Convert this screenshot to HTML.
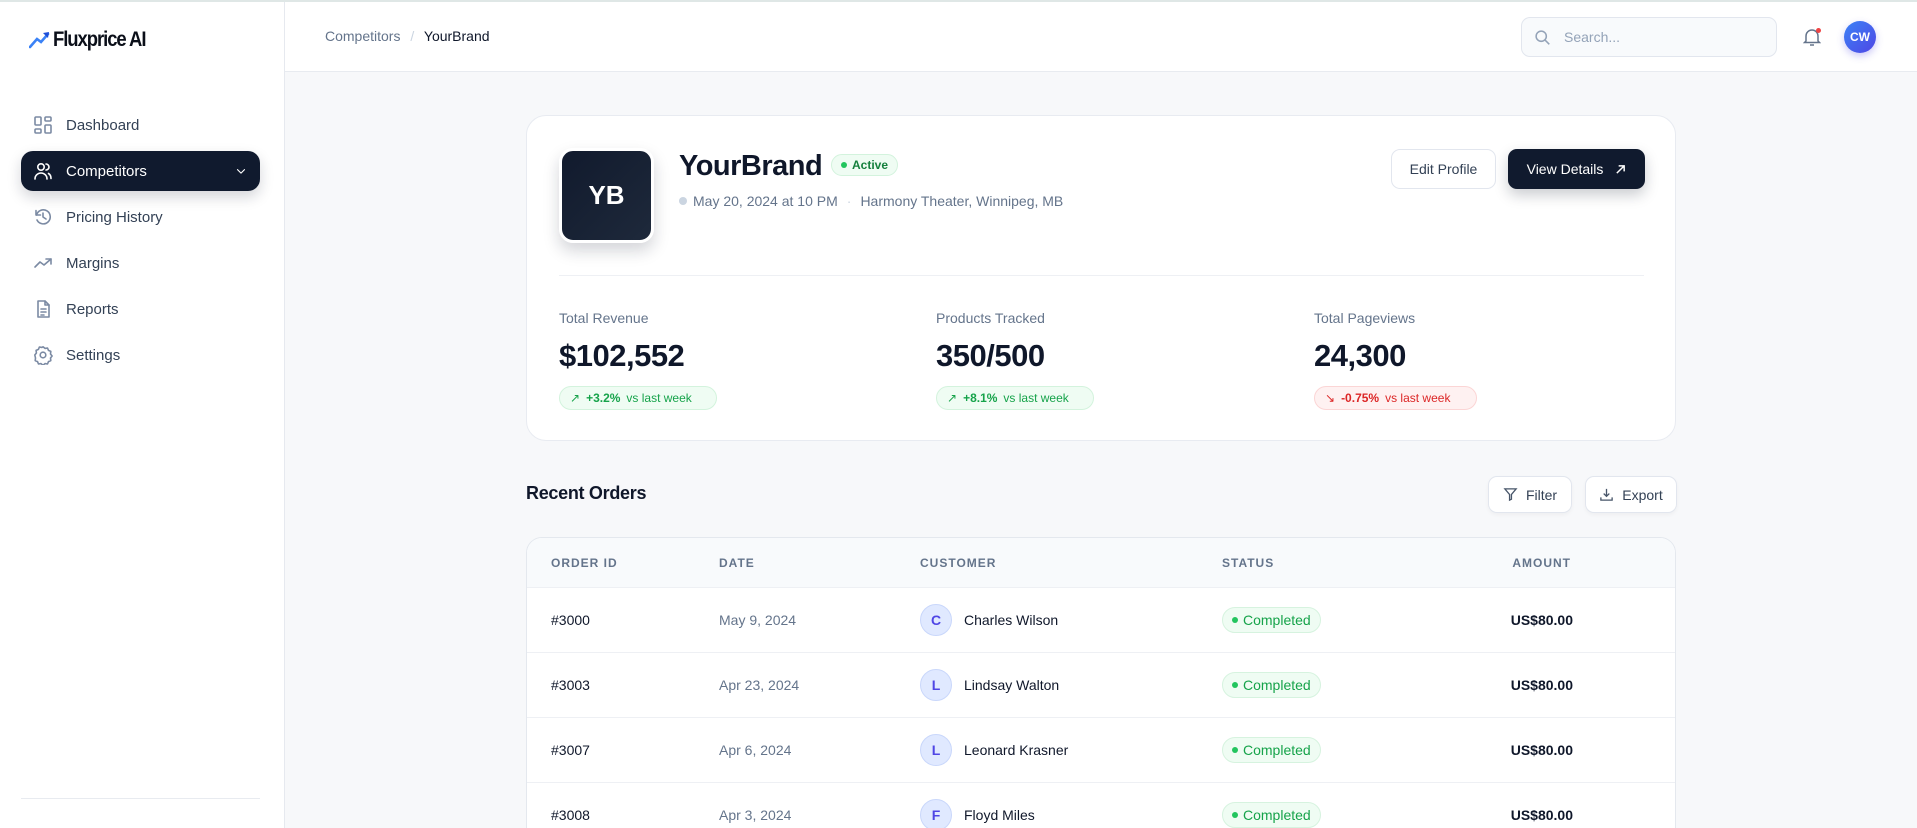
<!DOCTYPE html>
<html><head><meta charset="utf-8"><style>
*{box-sizing:border-box;margin:0;padding:0}
html,body{width:1917px;height:828px;overflow:hidden}
body{font-family:"Liberation Sans",sans-serif;background:#f7f8fa;color:#0f172a;position:relative}
.abs{position:absolute}
.side{left:0;top:0;width:285px;height:828px;background:#fff;border-right:1px solid #e6e9ef}
.topline{left:0;top:0;width:1917px;height:2px;background:#dfe7e6;z-index:5}
.hdr{left:285px;top:0;width:1632px;height:72px;background:#fff;border-bottom:1px solid #e8ebf0}
.nav{left:21px;width:239px;height:40px;display:flex;align-items:center;padding-left:12px;font-size:15px;color:#334155;border-radius:12px}
.nav svg{width:20px;height:20px;margin-right:13px;fill:none;stroke:#7b8aa3;stroke-width:1.6;stroke-linecap:round;stroke-linejoin:round}
.nav.act{background:#101a2e;color:#fff;box-shadow:0 6px 14px rgba(15,23,42,.18)}
.nav.act svg{stroke:#fff}
.card{left:526px;top:115px;width:1150px;height:326px;background:#fff;border:1px solid #e8ebf1;border-radius:20px}
.lbl{font-size:14px;color:#64748b}
.val{font-size:31px;font-weight:700;color:#0f172a;letter-spacing:-.5px}
.chg{height:24px;border-radius:12px;display:flex;align-items:center;padding:0 10px;font-size:12px;gap:6px}
.up{background:#effcf3;border:1px solid #d3f3dd;color:#16a34a}
.dn{background:#fef1f1;border:1px solid #fbd5d5;color:#dc2626}
.btn{height:40px;border-radius:9px;display:flex;align-items:center;justify-content:center;font-size:14px}
.tbl{left:526px;top:537px;width:1150px;height:420px;background:#fff;border:1px solid #e4e8ee;border-radius:16px;overflow:hidden}
.th{font-size:12px;font-weight:700;color:#64748b;letter-spacing:1px;top:18px}
.row{left:0;width:1150px;height:65px;border-top:1px solid #eef0f4}
.row>div{position:absolute;top:50%;transform:translateY(-50%);font-size:14px}
.av{width:32px;height:32px;border-radius:50%;background:#e0e9ff;border:1px solid #c9d7fb;color:#4f46e5;font-size:10px;font-weight:700;display:flex;align-items:center;justify-content:center}
.comp{height:26px;border-radius:13px;background:#effcf3;border:1px solid #d6f3df;color:#16a34a;font-size:11.5px;display:flex;align-items:center;padding:0 9px;gap:5px}
.dot{width:6px;height:6px;border-radius:50%;background:#22c55e;display:inline-block}
</style></head><body>
<div class="abs topline"></div>
<div class="abs side">
  <div class="abs" style="left:29px;top:28px;display:flex;align-items:center">
    <svg width="22" height="20" viewBox="0 0 22 20"><path d="M1 17 L8 9 L12 12 L19 4" stroke="#3b82f6" stroke-width="2.6" fill="none" stroke-linecap="round"/><path d="M14 3 L20 2 L19 8 Z" fill="#1d4ed8"/></svg>
    <span style="font-size:21px;font-weight:700;letter-spacing:-1.2px;margin-left:2px;color:#0b0f19;transform:scaleX(.88);transform-origin:left;display:inline-block">Fluxprice AI</span>
  </div>
  <div class="abs nav" style="top:105px"><svg viewBox="0 0 20 20"><rect x="2" y="2" width="6" height="8" rx="1"/><rect x="12" y="2" width="6" height="4" rx="1"/><rect x="2" y="14" width="6" height="4" rx="1"/><rect x="12" y="10" width="6" height="8" rx="1"/></svg>Dashboard</div>
  <div class="abs nav act" style="top:151px"><svg viewBox="0 0 20 20"><circle cx="8" cy="6" r="3.2"/><path d="M2 18c0-3.5 2.7-6 6-6s6 2.5 6 6"/><path d="M13 3a3 3 0 0 1 0 6M15.5 12.5c1.6.9 2.5 2.8 2.5 5"/></svg>Competitors<svg viewBox="0 0 20 20" style="position:absolute;right:12px;width:14px;height:14px;margin:0"><path d="M5 8l5 5 5-5"/></svg></div>
  <div class="abs nav" style="top:197px"><svg viewBox="0 0 20 20"><path d="M3.5 8a7 7 0 1 1 .5 5"/><path d="M3 3.5V8h4.5"/><path d="M10 6v4l3 2"/></svg>Pricing History</div>
  <div class="abs nav" style="top:243px"><svg viewBox="0 0 20 20"><path d="M2 14l5-5 4 3 7-6"/><path d="M13 6h5v5"/></svg>Margins</div>
  <div class="abs nav" style="top:289px"><svg viewBox="0 0 20 20"><path d="M5 2h7l4 4v12H5z"/><path d="M12 2v4h4M8 10h5M8 13h5M8 16h3"/></svg>Reports</div>
  <div class="abs nav" style="top:335px"><svg viewBox="0 0 20 20"><circle cx="10" cy="10" r="2.8"/><path d="M10 1.8l2 1.6 2.5-.4 1 2.4 2.3 1-.3 2.6 1.6 2-1.6 2 .3 2.6-2.3 1-1 2.4-2.5-.4-2 1.6-2-1.6-2.5.4-1-2.4-2.3-1 .3-2.6L1.8 10l1.6-2-.3-2.6 2.3-1 1-2.4 2.5.4z"/></svg>Settings</div>
  <div class="abs" style="left:21px;top:798px;width:239px;height:1px;background:#e8ebf0"></div>
</div>
<div class="abs hdr">
  <div class="abs" style="left:40px;top:28px;font-size:14px;color:#64748b">Competitors <span style="color:#cbd5e1;margin:0 6px">/</span> <span style="color:#0f172a">YourBrand</span></div>
  <div class="abs" style="left:1236px;top:17px;width:256px;height:40px;border:1px solid #e2e6ee;border-radius:9px;background:#f8fafc;display:flex;align-items:center;padding-left:12px;font-size:14px;color:#94a3b8">
    <svg width="17" height="17" viewBox="0 0 20 20" fill="none" stroke="#94a3b8" stroke-width="1.8"><circle cx="8.5" cy="8.5" r="6"/><path d="M13 13l5 5"/></svg><span style="margin-left:13px">Search...</span></div>
  <svg class="abs" style="left:1518px;top:27px" width="18" height="20" viewBox="0 0 18 20" fill="none" stroke="#64748b" stroke-width="1.5"><path d="M3 14V9a6 6 0 0 1 12 0v5l1.5 1.5h-15z"/><path d="M7 18h4"/></svg>
  <div class="abs" style="left:1531px;top:28px;width:5px;height:5px;border-radius:50%;background:#ef4444"></div>
  <div class="abs" style="left:1559px;top:21px;width:32px;height:32px;border-radius:50%;background:linear-gradient(135deg,#3b82f6,#4f46e5);color:#fff;font-size:12px;font-weight:700;display:flex;align-items:center;justify-content:center;box-shadow:0 3px 8px rgba(79,70,229,.3)">CW</div>
</div>
<div class="abs card">
  <div class="abs" style="left:32px;top:32px;width:95px;height:95px;border-radius:14px;background:linear-gradient(135deg,#111a2d,#1e293b);border:3px solid #fff;box-shadow:0 8px 16px rgba(15,23,42,.18);color:#fff;font-size:26px;font-weight:700;display:flex;align-items:center;justify-content:center">YB</div>
  <div class="abs" style="left:152px;top:34px;font-size:29px;font-weight:700;letter-spacing:-.5px">YourBrand</div>
  <div class="abs" style="left:304px;top:38px;height:22px;border-radius:11px;background:#effcf3;border:1px solid #d3f3dd;color:#15803d;font-size:12px;font-weight:700;display:flex;align-items:center;padding:0 9px;gap:5px"><span class="dot"></span>Active</div>
  <div class="abs" style="left:152px;top:77px;font-size:14px;color:#64748b;display:flex;align-items:center"><span class="dot" style="background:#cbd5e1;width:8px;height:8px;margin-right:6px"></span>May 20, 2024 at 10 PM <span style="color:#cbd5e1;margin:0 9px">·</span> Harmony Theater, Winnipeg, MB</div>
  <div class="abs btn" style="left:864px;top:33px;width:105px;border:1px solid #e2e6ee;color:#334155;background:#fff">Edit Profile</div>
  <div class="abs btn" style="left:981px;top:33px;width:137px;background:#101a2e;color:#fff;box-shadow:0 6px 14px rgba(15,23,42,.22)">View Details<svg style="margin-left:12px" width="11" height="11" viewBox="0 0 12 12" fill="none" stroke="#fff" stroke-width="1.6"><path d="M2 10L10 2M4 2h6v6"/></svg></div>
  <div class="abs" style="left:32px;top:159px;width:1085px;height:1px;background:#eef0f4"></div>
  <div class="abs" style="left:32px;top:194px"><div class="lbl">Total Revenue</div><div class="val" style="margin-top:12px">$102,552</div><div class="chg up" style="margin-top:12px;width:158px">↗ <b>+3.2%</b> vs last week</div></div>
  <div class="abs" style="left:409px;top:194px"><div class="lbl">Products Tracked</div><div class="val" style="margin-top:12px">350/500</div><div class="chg up" style="margin-top:12px;width:158px">↗ <b>+8.1%</b> vs last week</div></div>
  <div class="abs" style="left:787px;top:194px"><div class="lbl">Total Pageviews</div><div class="val" style="margin-top:12px">24,300</div><div class="chg dn" style="margin-top:12px;width:163px">↘ <b>-0.75%</b> vs last week</div></div>
</div>
<div class="abs" style="left:526px;top:483px;font-size:18px;font-weight:700;letter-spacing:-.3px">Recent Orders</div>
<div class="abs btn" style="left:1488px;top:476px;width:84px;height:37px;background:#fff;border:1px solid #e2e6ee;color:#334155;box-shadow:0 2px 4px rgba(0,0,0,.04)"><svg width="15" height="15" viewBox="0 0 16 16" fill="none" stroke="#475569" stroke-width="1.4" style="margin-right:8px"><path d="M2 2h12l-5 6v5l-2 1V8z"/></svg>Filter</div>
<div class="abs btn" style="left:1585px;top:476px;width:92px;height:37px;background:#fff;border:1px solid #e2e6ee;color:#334155;box-shadow:0 2px 4px rgba(0,0,0,.04)"><svg width="15" height="15" viewBox="0 0 16 16" fill="none" stroke="#475569" stroke-width="1.4" style="margin-right:8px"><path d="M8 2v8M5 7l3 3 3-3M2 11v3h12v-3"/></svg>Export</div>
<div class="abs tbl">
  <div class="abs" style="left:0;top:0;width:1150px;height:49px;background:#f8fafc"></div>
  <div class="abs th" style="left:24px">ORDER ID</div><div class="abs th" style="left:192px">DATE</div><div class="abs th" style="left:393px">CUSTOMER</div><div class="abs th" style="left:695px">STATUS</div><div class="abs th" style="right:104px">AMOUNT</div>
  <div class="abs row" style="top:49px"><div style="left:24px">#3000</div><div style="left:192px;color:#64748b">May 9, 2024</div><div class="av" style="left:393px">C</div><div style="left:437px">Charles Wilson</div><div class="comp" style="left:695px"><span class="dot"></span>Completed</div><div style="right:104px;font-weight:700">US$80.00</div></div>
  <div class="abs row" style="top:114px"><div style="left:24px">#3003</div><div style="left:192px;color:#64748b">Apr 23, 2024</div><div class="av" style="left:393px">L</div><div style="left:437px">Lindsay Walton</div><div class="comp" style="left:695px"><span class="dot"></span>Completed</div><div style="right:104px;font-weight:700">US$80.00</div></div>
  <div class="abs row" style="top:179px"><div style="left:24px">#3007</div><div style="left:192px;color:#64748b">Apr 6, 2024</div><div class="av" style="left:393px">L</div><div style="left:437px">Leonard Krasner</div><div class="comp" style="left:695px"><span class="dot"></span>Completed</div><div style="right:104px;font-weight:700">US$80.00</div></div>
  <div class="abs row" style="top:244px"><div style="left:24px">#3008</div><div style="left:192px;color:#64748b">Apr 3, 2024</div><div class="av" style="left:393px">F</div><div style="left:437px">Floyd Miles</div><div class="comp" style="left:695px"><span class="dot"></span>Completed</div><div style="right:104px;font-weight:700">US$80.00</div></div>
</div>
</body></html>
